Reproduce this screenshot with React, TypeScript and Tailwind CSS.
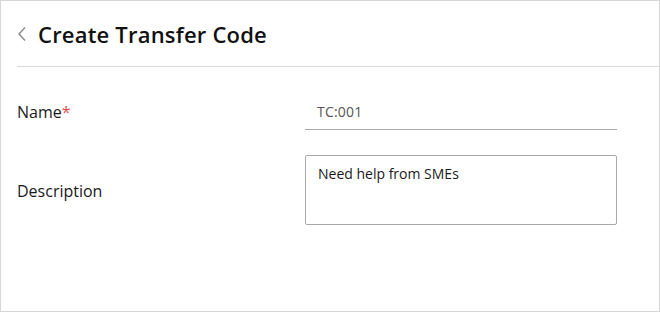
import React from "react";

export default function App() {
  return (
    <div
      className="w-[660px] h-[312px] bg-white border border-[#d6d6d6] box-border"
      style={{ fontFamily: '"Open Sans", "Noto Sans", sans-serif' }}
    >
      <div className="ml-[16px] h-[66px] flex items-center border-b border-[#d9d9d9]">
        <svg width="10" height="16" viewBox="0 0 10 16" className="mt-[1px]">
          <path d="M8 1.5 L2 8 L8 14.5" fill="none" stroke="#8a8a8a" strokeWidth="1.4" />
        </svg>
        <h1 className="ml-[11px] text-[22px] font-semibold text-[#111] leading-none tracking-[0.2px]">
          Create Transfer Code
        </h1>
      </div>
      <div className="pl-[16px] pr-[42px]">
        <div className="flex items-start pt-[33px]">
          <div className="w-[288px] text-[16px] text-[#1a1a1a] leading-[22px] mt-[1px]">
            Name<span className="text-[#e84a4a]">*</span>
          </div>
          <div className="flex-1 h-[30px] border-b border-[#a9a9a9] pl-[12px] text-[14px] text-[#555] leading-[20px] pt-[2px] tracking-[0.2px]">
            TC:001
          </div>
        </div>
        <div className="flex items-center mt-[25px]">
          <div className="w-[288px] text-[16px] text-[#1a1a1a] leading-[22px] mt-[1px]">Description</div>
          <div className="flex-1 h-[70px] border border-[#a9a9a9] rounded-[2px] pl-[12px] pt-[8px] text-[14px] text-[#1a1a1a] leading-[20px]">
            Need help from SMEs
          </div>
        </div>
      </div>
    </div>
  );
}
